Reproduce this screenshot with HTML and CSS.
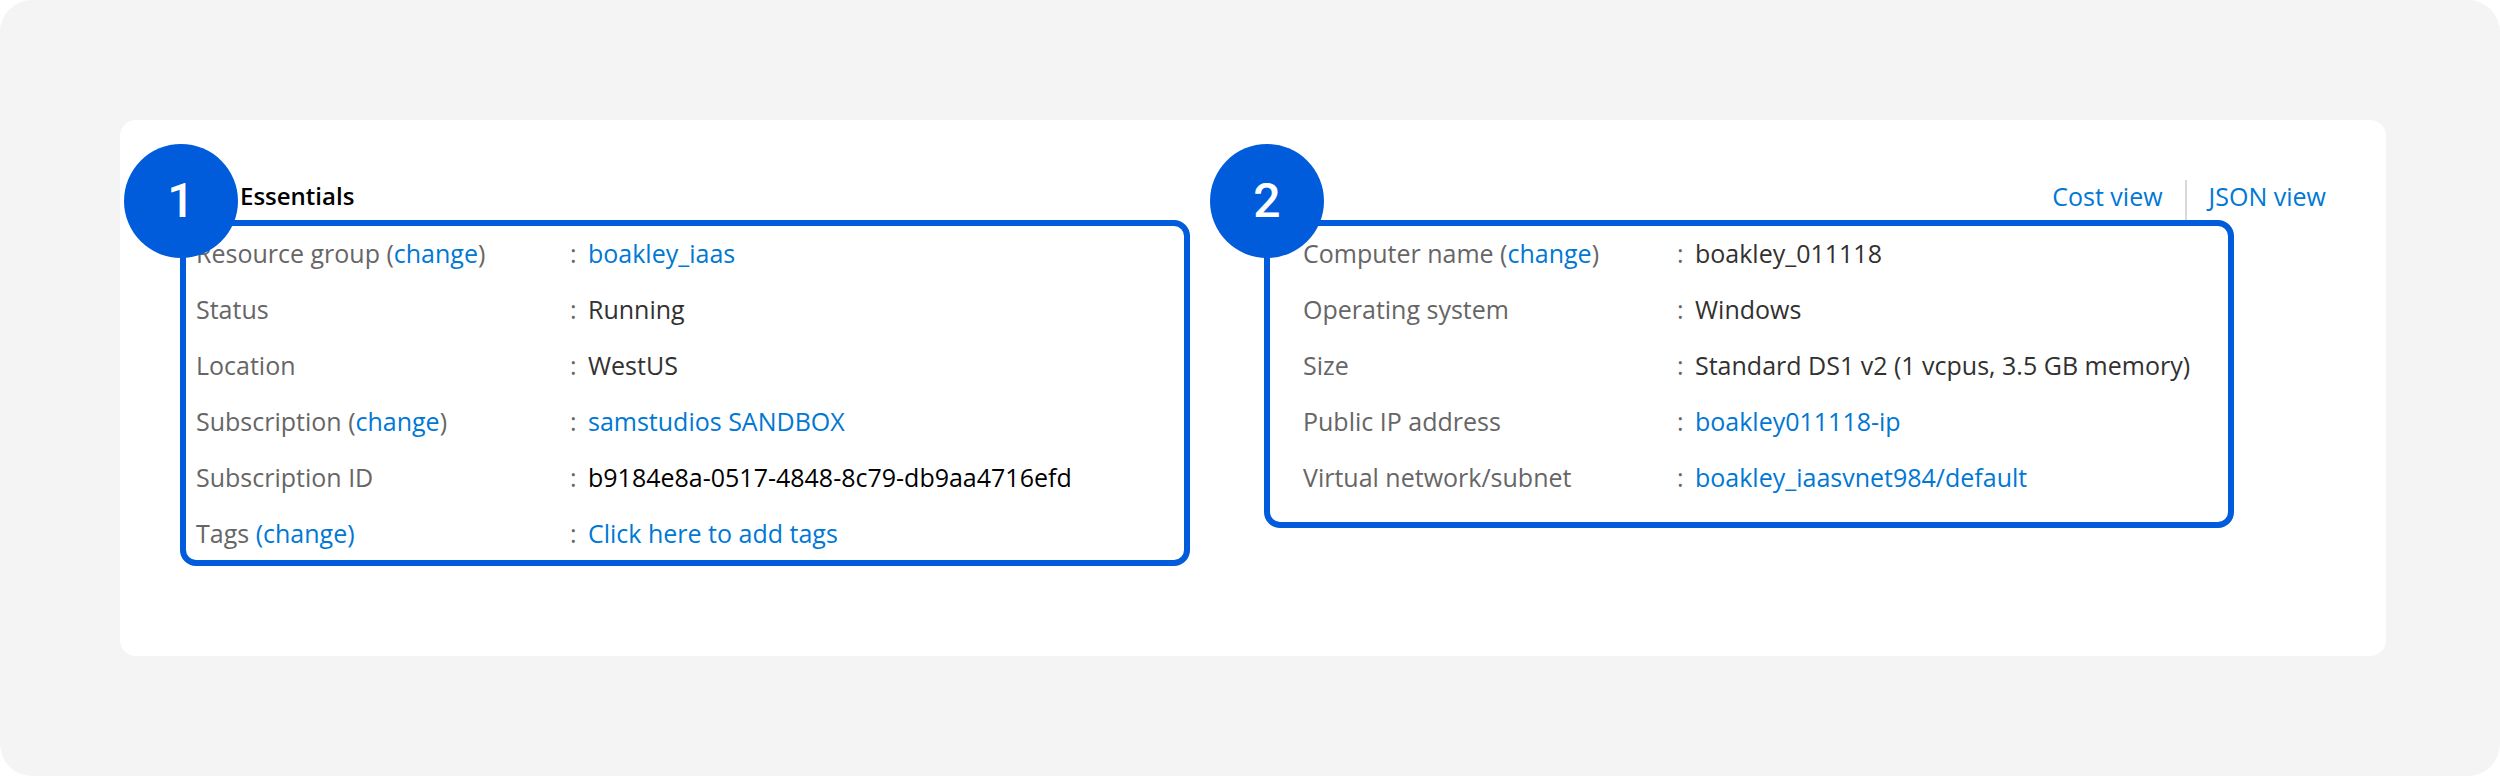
FILE: index.html
```html
<!DOCTYPE html>
<html lang="en">
<head>
  <meta charset="utf-8">
  <title>Essentials</title>
  <link rel="stylesheet" href="styles.css">
</head>
<body>
  <main class="stage">
    <section class="card">
      <header class="card-header">
        <h1 class="title">Essentials</h1>
        <nav class="views">
          <a class="view" href="#cost">Cost view</a>
          <a class="view" href="#json">JSON view</a>
        </nav>
      </header>
      <div class="groups">
        <section class="group">
          <span class="badge">1</span>
          <dl class="props">
            <dt>Resource group (<a href="#rg">change</a>)</dt><dd><a href="#iaas">boakley_iaas</a></dd>
            <dt>Status</dt><dd>Running</dd>
            <dt>Location</dt><dd>WestUS</dd>
            <dt>Subscription (<a href="#sub">change</a>)</dt><dd><a href="#sandbox">samstudios SANDBOX</a></dd>
            <dt>Subscription ID</dt><dd class="id">b9184e8a-0517-4848-8c79-db9aa4716efd</dd>
            <dt>Tags <a href="#tags">(change)</a></dt><dd><a href="#add">Click here to add tags</a></dd>
          </dl>
        </section>
        <section class="group group-machine">
          <span class="badge">2</span>
          <dl class="props">
            <dt>Computer name (<a href="#name">change</a>)</dt><dd>boakley_011118</dd>
            <dt>Operating system</dt><dd>Windows</dd>
            <dt>Size</dt><dd>Standard DS1 v2 (1 vcpus, 3.5 GB memory)</dd>
            <dt>Public IP address</dt><dd><a href="#ip">boakley011118-ip</a></dd>
            <dt>Virtual network/subnet</dt><dd><a href="#vnet">boakley_iaasvnet984/default</a></dd>
          </dl>
        </section>
      </div>
    </section>
  </main>
</body>
</html>
```
FILE: styles.css
```css
* {
  box-sizing: border-box;
}

body {
  margin: 0;
  background: #fff;
  color: #323130;
  font-family: "Open Sans", "Noto Sans", sans-serif;
  font-size: 25px;
  line-height: 32px;
}

a {
  color: #0078d4;
  text-decoration: none;
}

.stage {
  padding: 120px 114px 120px 120px;
  border-radius: 32px;
  background: #f4f4f4;
}

.card {
  padding: 60px 60px 90px;
  border-radius: 16px;
  background: #fff;
}

.card-header {
  display: flex;
  align-items: stretch;
  justify-content: space-between;
  padding-left: 60px;
}

.title {
  margin: 0;
  color: #000;
  font-size: 24px;
  font-weight: 600;
  line-height: 32px;
}

.views {
  display: flex;
}

.view {
  padding-bottom: 8px;
}

.view + .view {
  margin-left: 22px;
  padding-left: 22px;
  border-left: 2px solid #d9d9d9;
}

.groups {
  display: grid;
  grid-template-columns: 1010fr 970fr;
  gap: 74px;
  align-items: start;
  padding-right: 92px;
}

.group {
  position: relative;
  padding: 11px 10px;
  border: 6px solid #005cdb;
  border-radius: 16px;
}

.group-machine {
  padding: 11px 10px 29px 33px;
}

.badge {
  position: absolute;
  top: -82px;
  left: -62px;
  width: 114px;
  border-radius: 50%;
  background: #005cdb;
  color: #fff;
  font-family: Roboto, sans-serif;
  font-size: 48px;
  font-weight: 500;
  line-height: 114px;
  text-align: center;
}

.group-machine .badge {
  left: -60px;
}

.props {
  display: grid;
  grid-template-columns: 374px 1fr;
  row-gap: 24px;
  margin: 0;
}

.props dt {
  color: #666;
}

.props dd {
  display: flex;
  margin: 0;
  white-space: nowrap;
}

.props dd::before {
  content: ":";
  width: 18px;
  color: #666;
}

.props .id {
  color: #000;
}
```
